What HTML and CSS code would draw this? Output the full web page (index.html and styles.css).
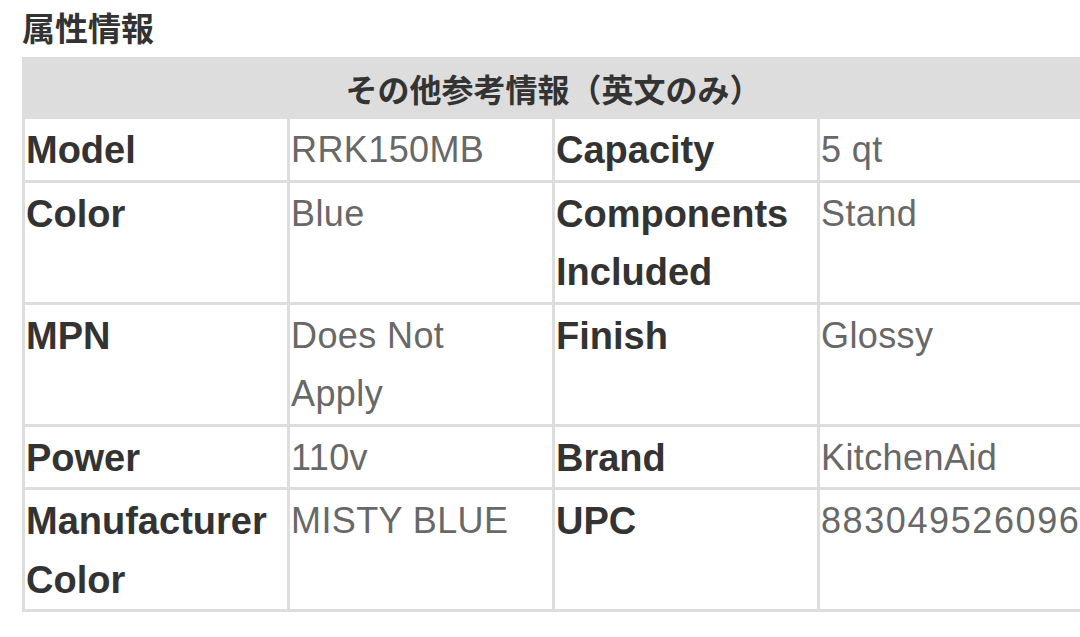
FILE: index.html
```html
<!DOCTYPE html>
<html lang="ja">
<head>
<meta charset="utf-8">
<title>属性情報</title>
<link rel="stylesheet" href="styles.css">
</head>
<body>
<section class="attrs">
  <h2 class="attrs-title">属性情報</h2>
  <table class="spec">
    <colgroup>
      <col class="c1"><col class="c2"><col class="c3"><col class="c4">
    </colgroup>
    <thead>
      <tr><th class="spec-head" colspan="4">その他参考情報（英文のみ）</th></tr>
    </thead>
    <tbody>
      <tr>
        <th class="k">Model</th><td class="v">RRK150MB</td>
        <th class="k">Capacity</th><td class="v">5 qt</td>
      </tr>
      <tr>
        <th class="k">Color</th><td class="v">Blue</td>
        <th class="k">Components Included</th><td class="v">Stand</td>
      </tr>
      <tr>
        <th class="k">MPN</th><td class="v">Does Not Apply</td>
        <th class="k">Finish</th><td class="v">Glossy</td>
      </tr>
      <tr>
        <th class="k">Power</th><td class="v">110v</td>
        <th class="k">Brand</th><td class="v">KitchenAid</td>
      </tr>
      <tr>
        <th class="k">Manufacturer Color</th><td class="v">MISTY BLUE</td>
        <th class="k">UPC</th><td class="v nowrap">883049526096</td>
      </tr>
    </tbody>
  </table>
</section>
</body>
</html>
```

FILE: styles.css
```css
html, body {
  margin: 0;
  padding: 0;
  background: #ffffff;
  overflow: hidden;
}

.attrs {
  padding: 7px 0 0 22px;
}

.attrs-title {
  margin: 0 0 10px 0;
  font-family: "Noto Sans CJK JP", sans-serif;
  font-weight: 700;
  font-size: 33px;
  line-height: 40px;
  color: #333333;
}

.spec {
  table-layout: fixed;
  width: 1063px;
  border-collapse: separate;
  border-spacing: 0;
  border-left: 3px solid #dddddd;
  border-top: 3px solid #dddddd;
  font-family: "Liberation Sans", "Noto Sans CJK JP", sans-serif;
}

.c1 { width: 265px; }
.c2 { width: 265px; }
.c3 { width: 265px; }
.c4 { width: 265px; }

.spec th,
.spec td {
  border-right: 3px solid #dddddd;
  border-bottom: 3px solid #dddddd;
  vertical-align: top;
  text-align: left;
  padding: 2px 0 0 1px;
  line-height: 58.5px;
}

.spec .spec-head {
  background: #dddddd;
  text-align: center;
  padding: 0;
  line-height: 56px;
  font-family: "Noto Sans CJK JP", sans-serif;
  font-weight: 700;
  font-size: 32px;
  color: #333333;
}

.k {
  font-weight: 700;
  font-size: 38px;
  color: #333333;
}

.spec .v {
  font-weight: 400;
  font-size: 36px;
  letter-spacing: 0.4px;
  padding-right: 12px;
  color: #686868;
}

.spec .nowrap {
  white-space: nowrap;
  letter-spacing: 1.6px;
}
```
